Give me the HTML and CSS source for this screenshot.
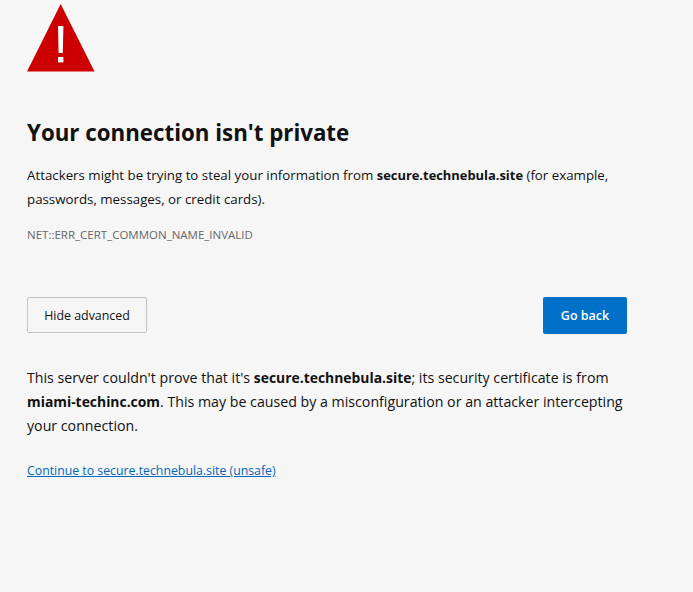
FILE: index.html
```html
<!DOCTYPE html>
<html lang="en">
<head>
    <meta charset="UTF-8">
    <title>Privacy error</title>
    <link rel="stylesheet" href="styles.css">
</head>
<body>
    <div class="page">
        <svg class="warning-icon" width="68" height="68" viewBox="0 0 68 68">
            <polygon points="33.7,0 67.5,67.5 0,67.5" fill="#cc0000"/>
            <polygon points="31,22 36.4,22 35.8,49 31.6,49" fill="#fff"/>
            <rect x="31" y="53" width="5.4" height="5.4" fill="#fff"/>
        </svg>
        <h1>Your connection isn't private</h1>
        <p class="message">Attackers might be trying to steal your information from <b>secure.technebula.site</b> (for example, passwords, messages, or credit cards).</p>
        <div class="error-code">NET::ERR_CERT_COMMON_NAME_INVALID</div>
        <div class="buttons">
            <button class="btn-advanced">Hide advanced</button>
            <button class="btn-back">Go back</button>
        </div>
        <p class="details">This server couldn't prove that it's <b>secure.technebula.site</b>; its security certificate is from <b>miami-techinc.com</b>. This may be caused by a misconfiguration or an attacker intercepting your connection.</p>
        <a class="proceed" href="#">Continue to secure.technebula.site (unsafe)</a>
    </div>
</body>
</html>
```
FILE: styles.css
```css
html, body {
    margin: 0;
    height: 100%;
    background-color: #f6f6f6;
}

body {
    font-family: "Open Sans", "Noto Sans", sans-serif;
    color: #111;
}

.page {
    width: 600px;
    padding: 4px 0 0 27px;
}

.warning-icon {
    display: block;
}

h1 {
    font-size: 22.3px;
    font-weight: 700;
    line-height: 30px;
    margin: 46px 0 0;
}

.message {
    font-size: 13.3px;
    line-height: 24px;
    margin: 15px 0 0;
}

.message b {
    font-size: 12.9px;
}

.error-code {
    font-size: 11.5px;
    line-height: 16px;
    color: #666;
    margin-top: 16px;
}

.buttons {
    display: flex;
    justify-content: space-between;
    align-items: flex-start;
    margin-top: 54px;
}

button {
    font-family: inherit;
    height: 36px;
    border-radius: 2px;
}

.btn-advanced {
    width: 120px;
    background-color: #f6f6f6;
    border: 1px solid #c4c4c4;
    color: #111;
    font-size: 12.4px;
}

.btn-back {
    width: 84px;
    height: 37px;
    background-color: #0070c9;
    border: none;
    color: #fff;
    font-size: 12.5px;
    font-weight: 600;
}

.details {
    font-size: 14.2px;
    line-height: 24px;
    margin: 32px 0 0;
}

.details b {
    font-size: 13.9px;
}

.proceed {
    display: inline-block;
    font-size: 12.3px;
    line-height: 18px;
    color: #0067b8;
    margin-top: 24px;
}
```
